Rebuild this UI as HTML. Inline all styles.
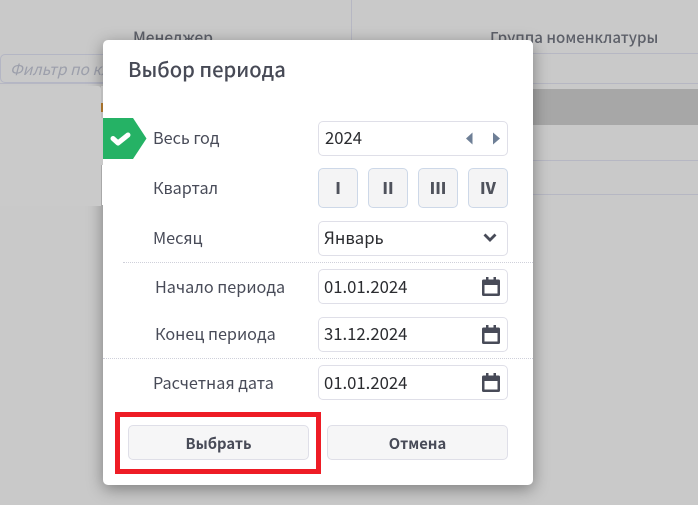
<!DOCTYPE html>
<html><head><meta charset="utf-8">
<style>
html,body{margin:0;padding:0}
body{width:698px;height:505px;overflow:hidden;position:relative;background:#c9c9c9;font-family:"Noto Sans CJK JP","Liberation Sans",sans-serif;color:#484b58}
.a{position:absolute}
.t{position:absolute;white-space:nowrap;line-height:20px;font-size:16.200px}
.f{position:absolute;left:318px;width:188px;height:33px;border:1px solid #dfdfe8;border-radius:5px;background:#fff}
.v{position:absolute;left:324px;white-space:nowrap;line-height:20px;font-size:16.700px;color:#2b2c30}
.q{position:absolute;top:168px;width:38px;height:38px;border:1px solid #cdd8e8;border-radius:5px;background:#f4f4f5;font-weight:900;font-size:16px;line-height:37px;text-align:center;color:#4f525c}
.b{position:absolute;top:425px;width:179px;height:33px;border:1px solid #dfdfe8;border-radius:5px;background:#f6f6f7;font-weight:700;font-size:14.800px;line-height:36px;text-align:center;color:#484b58}
.l{position:absolute;background:#b6b7c3;height:1px}
</style></head><body>
<div class="a" style="left:351px;top:0;width:1px;height:40px;background:#b6b7c3"></div>
<div class="t" style="left:133px;top:27px;font-size:15.400px;font-weight:500;color:#5d6069">Менеджер</div>
<div class="t" style="left:490px;top:27px;font-size:15.100px;font-weight:500;color:#5d6069">Группа номенклатуры</div>
<div class="l" style="left:351px;top:53px;width:347px"></div>
<div class="l" style="left:0;top:83px;width:698px"></div>
<div class="a" style="left:0;top:54px;width:120px;height:27px;border:1px solid #b4b6c4;border-radius:5px;box-sizing:content-box"></div>
<div class="t" style="left:10px;top:59px;font-size:15.500px;font-style:italic;color:#9c9fab;width:95px;overflow:hidden">Фильтр по клиенту</div>
<div class="a" style="left:300px;top:89px;width:398px;height:36px;background:#a7a7a7"></div>
<div class="l" style="left:300px;top:160px;width:398px"></div>
<div class="l" style="left:300px;top:194px;width:398px"></div>

<div class="a" style="left:103px;top:40px;width:430px;height:445px;background:#fff;border-radius:5px;box-shadow:0 4px 16px rgba(0,0,0,.38)"></div>
<div class="a" style="left:0;top:86px;width:101px;height:120px;background:#cacaca;border-radius:0 3px 0 0"></div>
<div class="a" style="left:101px;top:86px;width:2px;height:32px;background:#bcbcbc"></div>
<div class="a" style="left:101px;top:103px;width:2px;height:9px;background:#a5702a"></div>
<div class="a" style="left:101px;top:118px;width:2px;height:47px;background:#c9c9c9"></div>
<div class="a" style="left:102px;top:165px;width:1px;height:40px;background:#fff"></div>
<div class="t" style="left:128px;top:58px;font-size:20.200px;font-weight:500;line-height:22px;color:#474a56">Выбор периода</div>

<svg class="a" style="left:103px;top:118px" width="44" height="41" viewBox="0 0 44 41"><path d="M0 0H30L43.500 20.500L30 41H0Z" fill="#25b265"/><path d="M10 20.500L15 25L25 17" fill="none" stroke="#fff" stroke-width="5" stroke-linecap="round" stroke-linejoin="round"/></svg>

<div class="t" style="left:153px;top:127px">Весь год</div>
<div class="t" style="left:153px;top:177px">Квартал</div>
<div class="t" style="left:153px;top:227px">Месяц</div>
<div class="t" style="left:155px;top:276px">Начало периода</div>
<div class="t" style="left:155px;top:323px">Конец периода</div>
<div class="t" style="left:153px;top:372px">Расчетная дата</div>

<div class="f" style="top:121px"></div>
<div class="v" style="left:325px;top:127px">2024</div>
<svg class="a" style="left:464px;top:131px" width="40" height="15" viewBox="0 0 40 15"><path d="M8.500 1.500V13.500L2 7.500Z" fill="#6e7f96"/><path d="M29 1.500V13.500L36 7.500Z" fill="#6e7f96"/></svg>

<div class="q" style="left:318px">I</div>
<div class="q" style="left:368px">II</div>
<div class="q" style="left:418px">III</div>
<div class="q" style="left:468px">IV</div>

<div class="f" style="top:221px"></div>
<div class="v" style="top:227px">Январь</div>
<svg class="a" style="left:482px;top:232px" width="16" height="12" viewBox="0 0 16 12"><path d="M2.500 2.500L8 8L13.500 2.500" fill="none" stroke="#484b58" stroke-width="2.800"/></svg>

<div class="a" style="left:123px;top:262px;width:410px;border-top:1px dotted #cfd0da"></div>
<div class="f" style="top:269px"></div>
<div class="v" style="top:276px">01.01.2024</div>
<div class="f" style="top:317px"></div>
<div class="v" style="top:323px">31.12.2024</div>
<div class="a" style="left:103px;top:358px;width:430px;border-top:1px dotted #cfd0da"></div>
<div class="f" style="top:365px"></div>
<div class="v" style="top:372px">01.01.2024</div>

<svg class="a" style="left:482px;top:277px" width="18" height="19" viewBox="0 0 18 19"><path d="M1.500 2.500H16.500A1.500 1.500 0 0 1 18 4V17.500A1.500 1.500 0 0 1 16.500 19H1.500A1.500 1.500 0 0 1 0 17.500V4A1.500 1.500 0 0 1 1.500 2.500Z M2.500 8V16.500H15.500V8Z" fill="#484b58" fill-rule="evenodd"/><path d="M4 0H6.500V4H4Z M11.500 0H14V4H11.500Z" fill="#484b58"/></svg>
<svg class="a" style="left:482px;top:325px" width="18" height="19" viewBox="0 0 18 19"><path d="M1.500 2.500H16.500A1.500 1.500 0 0 1 18 4V17.500A1.500 1.500 0 0 1 16.500 19H1.500A1.500 1.500 0 0 1 0 17.500V4A1.500 1.500 0 0 1 1.500 2.500Z M2.500 8V16.500H15.500V8Z" fill="#484b58" fill-rule="evenodd"/><path d="M4 0H6.500V4H4Z M11.500 0H14V4H11.500Z" fill="#484b58"/></svg>
<svg class="a" style="left:482px;top:373px" width="18" height="19" viewBox="0 0 18 19"><path d="M1.500 2.500H16.500A1.500 1.500 0 0 1 18 4V17.500A1.500 1.500 0 0 1 16.500 19H1.500A1.500 1.500 0 0 1 0 17.500V4A1.500 1.500 0 0 1 1.500 2.500Z M2.500 8V16.500H15.500V8Z" fill="#484b58" fill-rule="evenodd"/><path d="M4 0H6.500V4H4Z M11.500 0H14V4H11.500Z" fill="#484b58"/></svg>

<div class="b" style="left:128px">Выбрать</div>
<div class="b" style="left:327px">Отмена</div>
<div class="a" style="left:115px;top:412px;width:196px;height:52px;border:5px solid #ee1c25"></div>
</body></html>
